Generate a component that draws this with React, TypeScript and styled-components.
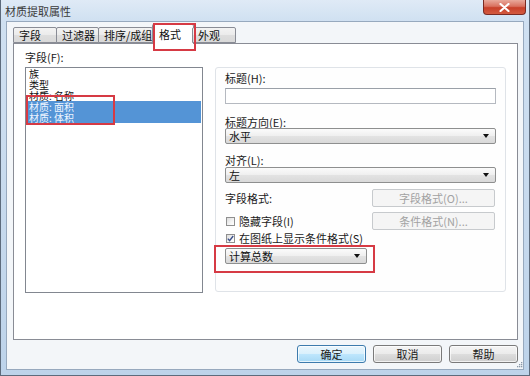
import React from 'react';
import styled, { createGlobalStyle } from 'styled-components';

const FONT = `"Noto Sans CJK SC", "Liberation Sans", sans-serif`;

const Global = createGlobalStyle`
  html, body { margin: 0; padding: 0; background: #ffffff; }
  body { font-family: ${FONT}; font-size: 11px; color: #1a1a1a; }
`;

const Window = styled.div`
  position: relative;
  width: 530px;
  height: 376px;
  box-sizing: border-box;
  display: flex;
  flex-direction: column;
  background: linear-gradient(180deg, #dfeaf6 0px, #cfe0f1 22px, #c6d9ed 60%, #bdd3ea 100%);
  border-left: 1px solid #5d6b7c;
  border-right: 1px solid #5d6b7c;
  border-bottom: 1px solid #5d6b7c;
  overflow: hidden;
`;

const TitleBar = styled.div`
  height: 21px;
  display: flex;
  align-items: flex-start;
  padding-left: 4px;
  flex-shrink: 0;
`;

const Title = styled.div`
  font-size: 11px;
  line-height: 12px;
  margin-top: 5px;
  color: #3a3a3a;
`;

const CloseButton = styled.div`
  margin-left: auto;
  margin-right: 3px;
  width: 43px;
  height: 15px;
  box-sizing: border-box;
  border: 1px solid #7a2a22;
  border-top: none;
  border-radius: 0 0 4px 4px;
  background: linear-gradient(180deg, #e9a99b 0%, #d9715f 45%, #c8402a 55%, #d35a3f 100%);
  display: flex;
  align-items: center;
  justify-content: center;
`;

const Client = styled.div`
  flex: 1;
  margin: 0 5px 5px 5px;
  border: 1px solid #97a9be;
  background: #f3f6f9;
  display: flex;
  flex-direction: column;
  padding: 0 5px 0 6px;
`;

const TabRow = styled.div`
  height: 21px;
  display: flex;
  align-items: flex-end;
  position: relative;
  z-index: 1;
`;

const Tab = styled.div<{ $w: number; $active?: boolean }>`
  box-sizing: border-box;
  width: ${p => p.$w}px;
  height: ${p => (p.$active ? 20 : 16)}px;
  margin: ${p => (p.$active ? '0 -1px -1px -1px' : '0 0 0 -1px')};
  border: 1px solid #898c95;
  border-bottom: ${p => (p.$active ? 'none' : '1px solid #898c95')};
  background: ${p =>
    p.$active ? '#ffffff' : 'linear-gradient(180deg, #f3f3f3 0%, #ebebeb 50%, #dedede 51%, #d9d9d9 100%)'};
  border-radius: 2px 2px 0 0;
  padding: ${p => (p.$active ? '3px 0 0 6px' : '1px 0 0 5px')};
  font-size: 11px;
  line-height: 13px;
  color: #111;
  white-space: nowrap;
  &:first-child { margin-left: 0; }
`;

const TabPanel = styled.div`
  height: 297px;
  box-sizing: border-box;
  border: 1px solid #898c95;
  background: #ffffff;
  display: flex;
  gap: 12px;
  padding: 7px 11px 0 11px;
`;

const LeftCol = styled.div`
  width: 178px;
  display: flex;
  flex-direction: column;
`;

const Label = styled.div<{ $mt?: number }>`
  font-size: 11px;
  line-height: 12px;
  color: #1a1a1a;
  margin-top: ${p => p.$mt ?? 0}px;
  white-space: nowrap;
`;

const ListBox = styled.div`
  margin-top: 4px;
  height: 226px;
  box-sizing: border-box;
  border: 1px solid #828790;
  background: #ffffff;
  padding: 0 1px 0 1px;
`;

const ListItem = styled.div<{ $sel?: boolean }>`
  height: 11px;
  line-height: 11px;
  font-size: 10px;
  padding-left: 2px;
  white-space: nowrap;
  color: ${p => (p.$sel ? '#eef5ff' : '#111')};
  background: ${p => (p.$sel ? '#5494d6' : 'transparent')};
`;

const Group = styled.div`
  flex: 1;
  margin-top: 16px;
  height: 225px;
  box-sizing: border-box;
  border: 1px solid #dfe3e8;
  border-radius: 3px;
  background: #fefefe;
  padding: 4px 9px 0 9px;
  display: flex;
  flex-direction: column;
`;

const TextInput = styled.div`
  margin-top: 4px;
  height: 16px;
  box-sizing: border-box;
  border: 1px solid #b5b9c0;
  border-top-color: #9aa0a8;
  background: #ffffff;
`;

const Combo = styled.div<{ $mt: number; $w?: number }>`
  margin-top: ${p => p.$mt}px;
  height: 16px;
  width: ${p => (p.$w ? `${p.$w}px` : 'auto')};
  box-sizing: border-box;
  border: 1px solid #8e8f8f;
  border-radius: 2px;
  background: linear-gradient(180deg, #fbfbfb 0%, #efefef 50%, #e3e3e3 51%, #d9d9d9 100%);
  display: flex;
  align-items: center;
  padding: 0 6px 0 3px;
  font-size: 11px;
  line-height: 12px;
  color: #111;
`;

const Arrow = styled.span`
  margin-left: auto;
  width: 0;
  height: 0;
  border-left: 3px solid transparent;
  border-right: 3px solid transparent;
  border-top: 4px solid #111;
`;

const Row = styled.div<{ $mt: number }>`
  margin-top: ${p => p.$mt}px;
  display: flex;
  align-items: center;
  justify-content: space-between;
`;

const DisabledButton = styled.div`
  width: 123px;
  height: 18px;
  box-sizing: border-box;
  border: 1px solid #c7cacd;
  border-radius: 2px;
  background: #f5f5f5;
  color: #a2a2a2;
  font-size: 11px;
  line-height: 16px;
  text-align: center;
  margin-right: 1px;
`;

const CheckLine = styled.label`
  display: flex;
  align-items: center;
  font-size: 11px;
  line-height: 12px;
  color: #1a1a1a;
  white-space: nowrap;
`;

const CheckBox = styled.span`
  width: 9px;
  height: 9px;
  box-sizing: border-box;
  border: 1px solid #8f8f8f;
  background: linear-gradient(135deg, #dcdcdc 0%, #f4f4f4 60%, #ffffff 100%);
  margin: 0 4px 0 1px;
  display: flex;
  align-items: center;
  justify-content: center;
`;

const Footer = styled.div`
  margin-top: 5px;
  display: flex;
  justify-content: flex-end;
  gap: 7px;
`;

const DialogButton = styled.div<{ $default?: boolean }>`
  width: 69px;
  height: 18px;
  box-sizing: border-box;
  border: 1px solid ${p => (p.$default ? '#3d7bad' : '#7a7a7a')};
  border-radius: 3px;
  background: ${p =>
    p.$default
      ? 'linear-gradient(180deg, #eaf6fd 0%, #d9f0fc 50%, #bee6fd 51%, #a7d9f5 100%)'
      : 'linear-gradient(180deg, #f4f4f4 0%, #ebebeb 50%, #dddddd 51%, #cfcfcf 100%)'};
  box-shadow: inset 0 0 0 1px rgba(255, 255, 255, 0.7);
  font-size: 11px;
  line-height: 16px;
  text-align: center;
  color: #1a1a1a;
`;

const Mark = styled.div<{ $x: number; $y: number; $w: number; $h: number }>`
  position: absolute;
  left: ${p => p.$x}px;
  top: ${p => p.$y}px;
  width: ${p => p.$w}px;
  height: ${p => p.$h}px;
  box-sizing: border-box;
  border: 2px solid #d63a44;
  pointer-events: none;
  z-index: 5;
`;

const Grip = styled.svg`
  position: absolute;
  right: 6px;
  bottom: 7px;
`;

export default function App() {
  return (
    <>
      <Global />
      <Window>
        <TitleBar>
          <Title>材质提取属性</Title>
          <CloseButton>
            <svg width="11" height="9" viewBox="0 0 11 9">
              <path d="M1.5 1 L9.5 8 M9.5 1 L1.5 8" stroke="#ffffff" strokeWidth="2.2" strokeLinecap="round" />
            </svg>
          </CloseButton>
        </TitleBar>
        <Client>
          <TabRow>
            <Tab $w={44}>字段</Tab>
            <Tab $w={43}>过滤器</Tab>
            <Tab $w={55}>排序/成组</Tab>
            <Tab $w={42} $active>格式</Tab>
            <Tab $w={44}>外观</Tab>
          </TabRow>
          <TabPanel>
            <LeftCol>
              <Label>字段(F):</Label>
              <ListBox>
                <ListItem>族</ListItem>
                <ListItem>类型</ListItem>
                <ListItem>材质: 名称</ListItem>
                <ListItem $sel>材质: 面积</ListItem>
                <ListItem $sel>材质: 体积</ListItem>
              </ListBox>
            </LeftCol>
            <Group>
              <Label>标题(H):</Label>
              <TextInput />
              <Label $mt={12}>标题方向(E):</Label>
              <Combo $mt={0}>
                水平
                <Arrow />
              </Combo>
              <Label $mt={10}>对齐(L):</Label>
              <Combo $mt={1}>
                左
                <Arrow />
              </Combo>
              <Row $mt={6}>
                <Label>字段格式:</Label>
                <DisabledButton>字段格式(O)...</DisabledButton>
              </Row>
              <Row $mt={5}>
                <CheckLine>
                  <CheckBox />
                  隐藏字段(I)
                </CheckLine>
                <DisabledButton>条件格式(N)...</DisabledButton>
              </Row>
              <Row $mt={2}>
                <CheckLine>
                  <CheckBox>
                    <svg width="7" height="7" viewBox="0 0 7 7">
                      <path d="M0.8 3.6 L2.6 5.6 L6.2 1" stroke="#3b4f8a" strokeWidth="1.4" fill="none" />
                    </svg>
                  </CheckBox>
                  在图纸上显示条件格式(S)
                </CheckLine>
              </Row>
              <Combo $mt={4} $w={142}>
                计算总数
                <Arrow />
              </Combo>
            </Group>
          </TabPanel>
          <Footer>
            <DialogButton $default>确定</DialogButton>
            <DialogButton>取消</DialogButton>
            <DialogButton>帮助</DialogButton>
          </Footer>
        </Client>
        <Grip width="7" height="7" viewBox="0 0 7 7">
          <rect x="5" y="1" width="1.3" height="1.3" fill="#8a98a8" />
          <rect x="3" y="3" width="1.3" height="1.3" fill="#8a98a8" />
          <rect x="5" y="3" width="1.3" height="1.3" fill="#8a98a8" />
          <rect x="1" y="5" width="1.3" height="1.3" fill="#8a98a8" />
          <rect x="3" y="5" width="1.3" height="1.3" fill="#8a98a8" />
          <rect x="5" y="5" width="1.3" height="1.3" fill="#8a98a8" />
        </Grip>
        <Mark $x={152} $y={23} $w={43} $h={28} />
        <Mark $x={25} $y={95} $w={89} $h={30} />
        <Mark $x={213} $y={245} $w={161} $h={28} />
      </Window>
    </>
  );
}
